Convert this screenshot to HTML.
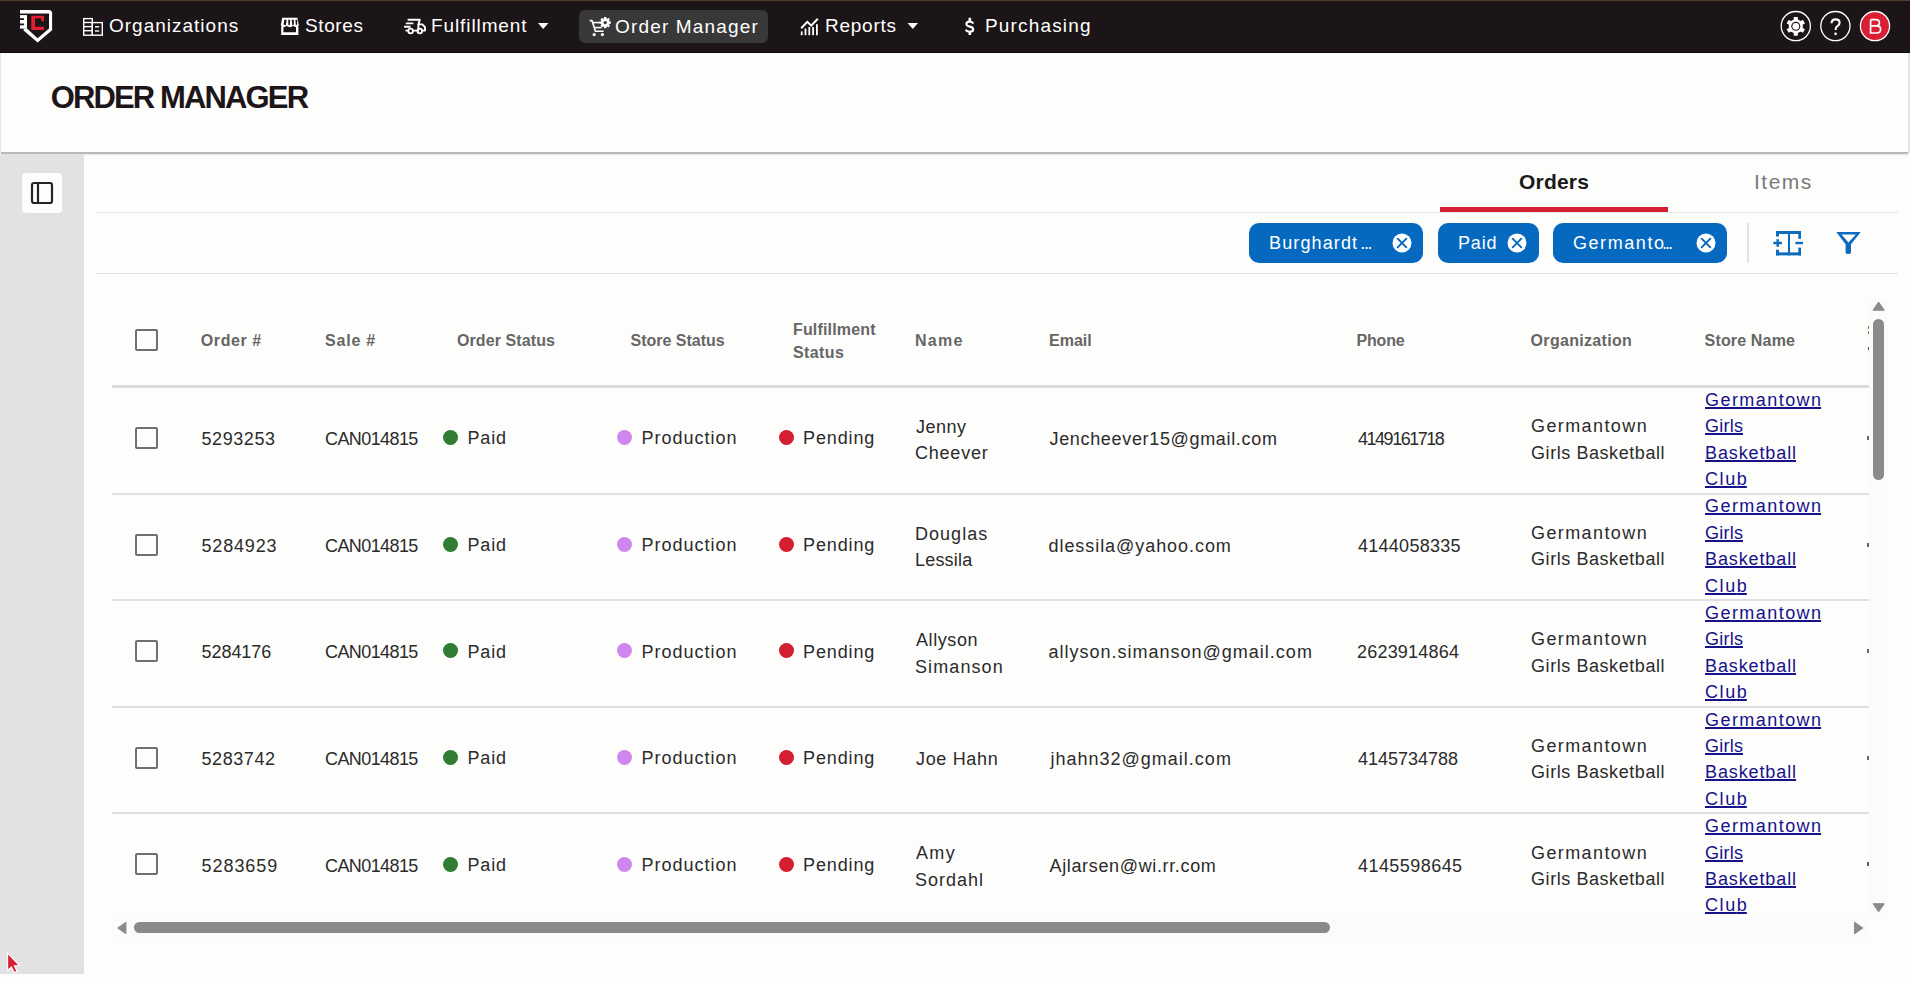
<!DOCTYPE html>
<html><head><meta charset="utf-8"><style>
html,body{margin:0;padding:0;}
body{width:1910px;height:984px;overflow:hidden;position:relative;background:#fdfdfc;font-family:"Liberation Sans", sans-serif;}
.t{position:absolute;white-space:nowrap;line-height:1;}
</style></head><body>
<div style="position:absolute;left:0px;top:0px;width:1910px;height:53px;background:#1c1517;"></div><div style="position:absolute;left:0px;top:0px;width:1910px;height:1px;background:#4e3d27;"></div><div style="position:absolute;left:0px;top:52px;width:1910px;height:1px;background:#0e0b0c;"></div><div style="position:absolute;left:579px;top:10px;width:189px;height:33px;background:#383838;border-radius:6px;"></div><div style="position:absolute;left:0px;top:53px;width:1910px;height:100px;background:#e4e4e6;"></div><div style="position:absolute;left:1px;top:53px;width:1907px;height:99px;background:#fdfdfc;"></div><div style="position:absolute;left:1px;top:152px;width:1907px;height:2px;background:#b9b9b9;"></div><div style="position:absolute;left:1px;top:154px;width:1907px;height:2px;background:linear-gradient(#e4e4e4,rgba(240,240,240,0));"></div><div style="position:absolute;left:0px;top:154px;width:84px;height:820px;background:#e2e2e5;"></div><div style="position:absolute;left:22px;top:173px;width:40px;height:40px;background:#fdfdfc;border-radius:4px;"></div><svg style="position:absolute;left:30px;top:181px" width="24" height="24" viewBox="0 0 24 24"><rect x="2" y="2" width="20" height="20" rx="2" fill="none" stroke="#252525" stroke-width="2.2"/><line x1="8" y1="2" x2="8" y2="22" stroke="#222" stroke-width="2.2"/></svg><div style="position:absolute;left:96px;top:212px;width:1802px;height:1px;background:#e3e3e3;"></div><div style="position:absolute;left:1440px;top:207px;width:228px;height:5px;background:#d71f34;"></div><div style="position:absolute;left:96px;top:273px;width:1802px;height:1px;background:#e3e3e3;"></div><div style="position:absolute;left:1249px;top:223px;width:174px;height:40px;background:#0569bf;border-radius:10px;"></div><svg style="position:absolute;left:1392.3px;top:232.6px" width="20" height="20" viewBox="0 0 20 20"><circle cx="10" cy="10" r="9.5" fill="#fff"/><path d="M5.7 5.7L14.3 14.3M14.3 5.7L5.7 14.3" stroke="#0569bf" stroke-width="1.9" stroke-linecap="round"/></svg><div style="position:absolute;left:1438px;top:223px;width:100.5px;height:40px;background:#0569bf;border-radius:10px;"></div><svg style="position:absolute;left:1507px;top:232.6px" width="20" height="20" viewBox="0 0 20 20"><circle cx="10" cy="10" r="9.5" fill="#fff"/><path d="M5.7 5.7L14.3 14.3M14.3 5.7L5.7 14.3" stroke="#0569bf" stroke-width="1.9" stroke-linecap="round"/></svg><div style="position:absolute;left:1553px;top:223px;width:174px;height:40px;background:#0569bf;border-radius:10px;"></div><svg style="position:absolute;left:1696px;top:232.6px" width="20" height="20" viewBox="0 0 20 20"><circle cx="10" cy="10" r="9.5" fill="#fff"/><path d="M5.7 5.7L14.3 14.3M14.3 5.7L5.7 14.3" stroke="#0569bf" stroke-width="1.9" stroke-linecap="round"/></svg><div style="position:absolute;left:1747px;top:223px;width:2px;height:40px;background:#e4e4e4;"></div><svg style="position:absolute;left:1772px;top:230px" width="34" height="27" viewBox="0 0 34 27"><g fill="#0b6cbd"><rect x="4" y="1" width="25" height="3"/><rect x="4" y="22.4" width="25" height="3"/><rect x="4" y="1" width="3" height="5.5"/><rect x="4" y="19.8" width="3" height="5.6"/><rect x="26.3" y="1" width="2.7" height="7.8"/><rect x="26.3" y="17.6" width="2.7" height="7.8"/><rect x="16" y="1" width="2" height="24.4"/><rect x="1.4" y="11.8" width="8.6" height="2.4"/><rect x="4.5" y="9.2" width="2.4" height="7.7"/><rect x="23.4" y="11.8" width="7.6" height="2.4"/></g></svg><svg style="position:absolute;left:1835px;top:230px" width="28" height="27" viewBox="0 0 28 27"><path d="M2.1 1.9 H24.9 Q25.6 2 25.2 2.8 L16 14.3 V22.4 Q16 23.9 13.3 23.9 Q10.6 23.9 10.6 22.4 V14.3 L1.8 2.8 Q1.4 2 2.1 1.9 Z M6.5 4.4 H20.8 L13.5 12.6 Z" fill="#0b6cbd" fill-rule="evenodd"/></svg><div style="position:absolute;left:135px;top:329px;width:22.6px;height:22px;box-sizing:border-box;border:2.6px solid #707070;border-radius:2px;background:#fdfdfc;"></div><div style="position:absolute;left:112px;top:385px;width:1757px;height:3px;background:#dcdcdf;"></div><div style="position:absolute;left:135px;top:427.0px;width:22.6px;height:22px;box-sizing:border-box;border:2.6px solid #707070;border-radius:2px;background:#fdfdfc;"></div><div style="position:absolute;left:112px;top:492.5px;width:1757px;height:2px;background:#e0e0e0;"></div><div style="position:absolute;left:442.5px;top:430.1px;width:15px;height:15px;border-radius:50%;background:#2e7d32"></div><div style="position:absolute;left:617.0px;top:430.1px;width:15px;height:15px;border-radius:50%;background:#cf86ef"></div><div style="position:absolute;left:778.8px;top:430.1px;width:15px;height:15px;border-radius:50%;background:#d41f30"></div><div style="position:absolute;left:135px;top:533.6px;width:22.6px;height:22px;box-sizing:border-box;border:2.6px solid #707070;border-radius:2px;background:#fdfdfc;"></div><div style="position:absolute;left:112px;top:599.1px;width:1757px;height:2px;background:#e0e0e0;"></div><div style="position:absolute;left:442.5px;top:536.7px;width:15px;height:15px;border-radius:50%;background:#2e7d32"></div><div style="position:absolute;left:617.0px;top:536.7px;width:15px;height:15px;border-radius:50%;background:#cf86ef"></div><div style="position:absolute;left:778.8px;top:536.7px;width:15px;height:15px;border-radius:50%;background:#d41f30"></div><div style="position:absolute;left:135px;top:640.2px;width:22.6px;height:22px;box-sizing:border-box;border:2.6px solid #707070;border-radius:2px;background:#fdfdfc;"></div><div style="position:absolute;left:112px;top:705.7px;width:1757px;height:2px;background:#e0e0e0;"></div><div style="position:absolute;left:442.5px;top:643.3px;width:15px;height:15px;border-radius:50%;background:#2e7d32"></div><div style="position:absolute;left:617.0px;top:643.3px;width:15px;height:15px;border-radius:50%;background:#cf86ef"></div><div style="position:absolute;left:778.8px;top:643.3px;width:15px;height:15px;border-radius:50%;background:#d41f30"></div><div style="position:absolute;left:135px;top:746.8px;width:22.6px;height:22px;box-sizing:border-box;border:2.6px solid #707070;border-radius:2px;background:#fdfdfc;"></div><div style="position:absolute;left:112px;top:812.3px;width:1757px;height:2px;background:#e0e0e0;"></div><div style="position:absolute;left:442.5px;top:749.9px;width:15px;height:15px;border-radius:50%;background:#2e7d32"></div><div style="position:absolute;left:617.0px;top:749.9px;width:15px;height:15px;border-radius:50%;background:#cf86ef"></div><div style="position:absolute;left:778.8px;top:749.9px;width:15px;height:15px;border-radius:50%;background:#d41f30"></div><div style="position:absolute;left:135px;top:853.4px;width:22.6px;height:22px;box-sizing:border-box;border:2.6px solid #707070;border-radius:2px;background:#fdfdfc;"></div><div style="position:absolute;left:442.5px;top:856.5px;width:15px;height:15px;border-radius:50%;background:#2e7d32"></div><div style="position:absolute;left:617.0px;top:856.5px;width:15px;height:15px;border-radius:50%;background:#cf86ef"></div><div style="position:absolute;left:778.8px;top:856.5px;width:15px;height:15px;border-radius:50%;background:#d41f30"></div><div style="position:absolute;left:1867px;top:436.0px;width:1.5px;height:4px;background:#666;"></div><div style="position:absolute;left:1867px;top:542.6px;width:1.5px;height:4px;background:#666;"></div><div style="position:absolute;left:1867px;top:649.2px;width:1.5px;height:4px;background:#666;"></div><div style="position:absolute;left:1867px;top:755.8px;width:1.5px;height:4px;background:#666;"></div><div style="position:absolute;left:1867px;top:862.4px;width:1.5px;height:4px;background:#666;"></div><div style="position:absolute;left:1867.6px;top:326px;width:1.2px;height:3.2px;background:#8a6a4a;"></div><div style="position:absolute;left:1867.6px;top:331px;width:1.2px;height:2.6px;background:#8a7a6a;"></div><div style="position:absolute;left:1867.6px;top:347px;width:1.2px;height:2.6px;background:#555;"></div><div style="position:absolute;left:1869px;top:298px;width:18px;height:620px;background:#fbfbfb;"></div><div style="position:absolute;left:112px;top:918px;width:1757px;height:19px;background:#fbfbfb;"></div><svg style="position:absolute;left:0;top:0" width="1910" height="984" viewBox="0 0 1910 984"><g fill="#8a8a8a" stroke="#8a8a8a" stroke-width="1.2" stroke-linejoin="round"><path d="M1873.3 310.2 L1884 310.2 L1878.6 302.4 Z"/><path d="M1873.3 903.8 L1884 903.8 L1878.6 911.4 Z"/><path d="M125.8 922.4 L125.8 933.4 L118 927.9 Z"/><path d="M1854.6 922.4 L1854.6 933.4 L1862.6 927.9 Z"/></g><rect x="1873" y="319" width="11" height="161" rx="5.5" fill="#8a8a8a"/><rect x="134" y="922" width="1196" height="11" rx="5.5" fill="#8a8a8a"/></svg><svg style="position:absolute;left:0;top:0" width="1910" height="53" viewBox="0 0 1910 53"><g fill="#fff"><path d="M20 10 H48.6 Q52 10 52 13.4 V13.4 H20 Z"/><rect x="20" y="10" width="29" height="3.1"/><rect x="49" y="12" width="3.1" height="17.6"/><path d="M52.1 28.4 L52.1 30.2 L37.6 42.6 L23.6 30.4 L23.6 28.6 L27 28.6 L37.6 38.2 L49 28.4 Z"/><rect x="20" y="15.1" width="7" height="13.5"/></g><g fill="#1c1517"><rect x="19.5" y="18.2" width="4.4" height="1.8"/><rect x="19.5" y="23.5" width="4.4" height="1.8"/></g><path d="M31.3 15.7 H44 V21.2 H41.2 V18.3 H35 V26.7 H44 V30.1 H31.3 Z" fill="#e51d2e"/><g fill="none" stroke="#fff" stroke-width="1.4"><rect x="83.7" y="18.6" width="8.6" height="16.6"/><line x1="83.7" y1="22.5" x2="92.3" y2="22.5"/><line x1="83.7" y1="26.6" x2="92.3" y2="26.6"/><line x1="83.7" y1="30.7" x2="92.3" y2="30.7"/><rect x="92.3" y="22.6" width="10" height="12.6"/><line x1="95" y1="26.8" x2="99.2" y2="26.8"/><line x1="95" y1="31" x2="99.2" y2="31"/></g><g fill="#fff"><path d="M282.2 17.8 H297.4 L298.8 25.2 Q298.4 27.2 296.2 27.2 Q294.4 27.2 293.2 25.8 Q292 27.2 290 27.2 Q288 27.2 286.6 25.8 Q285.4 27.2 283.6 27.2 Q281.4 27.2 280.8 25.2 Z"/></g><g fill="#1c1517"><path d="M284.4 19.8 H286.6 L285.9 24.8 Q285.2 25.6 284.2 24.8 L283.6 24.4 Z"/><path d="M288.2 19.8 H290.2 L289.9 24.8 Q289.2 25.6 288.4 24.8 Z"/><path d="M291.8 19.8 H293.8 L293.8 24.6 Q293 25.6 292.2 24.8 Z"/><path d="M295.4 19.8 H297.4 L297.1 24.4 Q296.4 25.4 295.8 24.6 Z"/></g><path d="M281.2 26.4 H283.4 V32.3 H296 V26.4 H298.4 V35 H281.2 Z" fill="#fff"/><g fill="none" stroke="#fff" stroke-width="1.9" stroke-linecap="round" stroke-linejoin="round"><path d="M408.4 19.8 H419.8 L418.4 24.4 H422.4 L425 27.2 V30.6 H422.2"/><path d="M418.4 24.4 V30.6"/><path d="M406.2 30.6 H408"/><path d="M413.2 30.6 H417"/><path d="M406.6 23.4 H412.6"/><path d="M404.8 26.8 H409.8"/></g><g fill="none" stroke="#fff" stroke-width="1.8"><circle cx="410.6" cy="31" r="2.3"/><circle cx="419.8" cy="31" r="2.3"/></g><g fill="none" stroke="#fff" stroke-width="1.6" stroke-linejoin="round"><path d="M589.6 20.6 H592 L595.4 31.2 H603.6"/><path d="M592.8 22.6 H600"/><path d="M594.6 27.6 H601.6"/></g><circle cx="594.2" cy="34.6" r="1.6" fill="#fff"/><circle cx="602.4" cy="34.6" r="1.6" fill="#fff"/><g transform="translate(605.2 22.6)"><circle r="4.3" fill="#fff"/><g fill="#fff"><rect x="-1.2" y="-5.6" width="2.4" height="2.6" transform="rotate(0)"/><rect x="-1.2" y="-5.6" width="2.4" height="2.6" transform="rotate(45)"/><rect x="-1.2" y="-5.6" width="2.4" height="2.6" transform="rotate(90)"/><rect x="-1.2" y="-5.6" width="2.4" height="2.6" transform="rotate(135)"/><rect x="-1.2" y="-5.6" width="2.4" height="2.6" transform="rotate(180)"/><rect x="-1.2" y="-5.6" width="2.4" height="2.6" transform="rotate(225)"/><rect x="-1.2" y="-5.6" width="2.4" height="2.6" transform="rotate(270)"/><rect x="-1.2" y="-5.6" width="2.4" height="2.6" transform="rotate(315)"/></g><circle r="1.7" fill="#383838"/></g><path d="M801.2 28.2 L807.3 21.8 L811.2 25.6 L817.8 18.8" fill="none" stroke="#fff" stroke-width="2"/><g fill="#fff"><rect x="800.8" y="31.4" width="1.8" height="3.8"/><rect x="804.6" y="28.6" width="1.8" height="6.6"/><rect x="808.4" y="27" width="1.8" height="8.2"/><rect x="812.2" y="27" width="1.8" height="8.2"/><rect x="816" y="24.2" width="1.8" height="11"/></g><path d="M973.3 23.6 Q972.4 21.6 969.7 21.6 Q966.4 21.6 966.4 24.1 Q966.4 26.1 969.7 26.6 Q973.2 27.2 973.2 29.5 Q973.2 31.7 969.7 31.7 Q966.7 31.7 965.8 29.6" fill="none" stroke="#fff" stroke-width="2.1"/><rect x="968.5" y="17.8" width="2.6" height="4" fill="#fff"/><rect x="968.5" y="31" width="2.6" height="4" fill="#fff"/><path d="M538 23 H548.4 L543.2 29 Z" fill="#fff"/><path d="M907.6 23 H918 L912.8 29 Z" fill="#fff"/><circle cx="1795.8" cy="26.1" r="14.6" fill="none" stroke="#fff" stroke-width="1.3"/><circle cx="1835.4" cy="26.1" r="14.6" fill="none" stroke="#fff" stroke-width="1.3"/><circle cx="1875" cy="26.1" r="14.6" fill="#d81f33" stroke="#fff" stroke-width="1.3"/><g transform="translate(1795.8 26.3)"><circle r="7" fill="#fff"/><g fill="#fff"><rect x="-2.1" y="-9.4" width="4.2" height="4" rx="0.6" transform="rotate(0)"/><rect x="-2.1" y="-9.4" width="4.2" height="4" rx="0.6" transform="rotate(60)"/><rect x="-2.1" y="-9.4" width="4.2" height="4" rx="0.6" transform="rotate(120)"/><rect x="-2.1" y="-9.4" width="4.2" height="4" rx="0.6" transform="rotate(180)"/><rect x="-2.1" y="-9.4" width="4.2" height="4" rx="0.6" transform="rotate(240)"/><rect x="-2.1" y="-9.4" width="4.2" height="4" rx="0.6" transform="rotate(300)"/></g><circle r="4.5" fill="#1c1517"/><circle r="3.4" fill="#fff"/></g><path d="M1831.6 23.2 Q1831.6 19.4 1835.6 19.4 Q1839.6 19.4 1839.6 22.8 Q1839.6 25 1837.4 26.2 Q1835.6 27.2 1835.6 30" fill="none" stroke="#fff" stroke-width="2.1"/><path d="M1870.6 19.7 V33 H1876.6 Q1880.6 33 1880.6 29.2 Q1880.6 25.9 1876.4 25.9 H1870.6 M1870.6 25.9 H1875.8 Q1879.4 25.9 1879.4 22.8 Q1879.4 19.7 1875.8 19.7 H1870.6" fill="none" stroke="#fff" stroke-width="1.7"/><circle cx="1835.6" cy="33.8" r="1.4" fill="#fff"/></svg><svg style="position:absolute;left:6px;top:952px" width="16" height="22" viewBox="0 0 16 22"><path d="M1.6 1.2 L1.6 18.4 L5.4 14.8 L8.2 20.6 L11 19.4 L8.4 13.8 L13.4 13.6 Z" fill="#d81f33" stroke="#fff" stroke-width="1.1" stroke-linejoin="miter"/></svg>
<div class="t" style="left:109.00px;top:16.30px;font-size:19px;font-weight:400;color:#ffffff;letter-spacing:1.000px;">Organization<span style="letter-spacing:0">s</span></div><div class="t" style="left:305.00px;top:16.30px;font-size:19px;font-weight:400;color:#ffffff;letter-spacing:0.600px;">Store<span style="letter-spacing:0">s</span></div><div class="t" style="left:431.00px;top:16.30px;font-size:19px;font-weight:400;color:#ffffff;letter-spacing:0.900px;">Fulfillmen<span style="letter-spacing:0">t</span></div><div class="t" style="left:615.00px;top:16.50px;font-size:19px;font-weight:400;color:#ffffff;letter-spacing:1.167px;">Order Manage<span style="letter-spacing:0">r</span></div><div class="t" style="left:825.00px;top:16.30px;font-size:19px;font-weight:400;color:#ffffff;letter-spacing:0.750px;">Report<span style="letter-spacing:0">s</span></div><div class="t" style="left:985.00px;top:16.30px;font-size:19px;font-weight:400;color:#ffffff;letter-spacing:1.167px;">Purchasin<span style="letter-spacing:0">g</span></div><div class="t" style="left:50.70px;top:82.00px;font-size:31px;font-weight:700;color:#1d1517;letter-spacing:-1.867px;">ORDER MANAGE<span style="letter-spacing:0">R</span></div><div class="t" style="left:1519.00px;top:171.40px;font-size:21px;font-weight:700;color:#1a1a1a;letter-spacing:0.200px;">Order<span style="letter-spacing:0">s</span></div><div class="t" style="left:1754.00px;top:171.40px;font-size:21px;font-weight:400;color:#7a7a7a;letter-spacing:1.500px;">Item<span style="letter-spacing:0">s</span></div><div class="t" style="left:1269.00px;top:233.50px;font-size:18px;font-weight:400;color:#ffffff;letter-spacing:1.125px;">Burghard<span style="letter-spacing:0">t</span></div><div class="t" style="left:1360.30px;top:233.50px;font-size:18px;font-weight:400;color:#ffffff;letter-spacing:-1.400px;">..<span style="letter-spacing:0">.</span></div><div class="t" style="left:1458.00px;top:233.50px;font-size:18px;font-weight:400;color:#ffffff;letter-spacing:0.833px;">Pai<span style="letter-spacing:0">d</span></div><div class="t" style="left:1572.90px;top:233.50px;font-size:18px;font-weight:400;color:#ffffff;letter-spacing:1.586px;">Germant<span style="letter-spacing:0">o</span></div><div class="t" style="left:1662.00px;top:233.50px;font-size:18px;font-weight:400;color:#ffffff;letter-spacing:-2.000px;">..<span style="letter-spacing:0">.</span></div><div class="t" style="left:200.80px;top:332.80px;font-size:16px;font-weight:700;color:#666666;letter-spacing:0.583px;">Order <span style="letter-spacing:0">#</span></div><div class="t" style="left:325.00px;top:332.80px;font-size:16px;font-weight:700;color:#666666;letter-spacing:0.800px;">Sale <span style="letter-spacing:0">#</span></div><div class="t" style="left:457.00px;top:332.80px;font-size:16px;font-weight:700;color:#666666;letter-spacing:0.091px;">Order Statu<span style="letter-spacing:0">s</span></div><div class="t" style="left:630.50px;top:332.80px;font-size:16px;font-weight:700;color:#666666;letter-spacing:0.000px;">Store Status</div><div class="t" style="left:793.00px;top:322.00px;font-size:16px;font-weight:700;color:#666666;letter-spacing:0.160px;">Fulfillmen<span style="letter-spacing:0">t</span></div><div class="t" style="left:793.00px;top:344.80px;font-size:16px;font-weight:700;color:#666666;letter-spacing:0.400px;">Statu<span style="letter-spacing:0">s</span></div><div class="t" style="left:915.00px;top:332.80px;font-size:16px;font-weight:700;color:#666666;letter-spacing:1.233px;">Nam<span style="letter-spacing:0">e</span></div><div class="t" style="left:1049.00px;top:332.80px;font-size:16px;font-weight:700;color:#666666;letter-spacing:0.000px;">Email</div><div class="t" style="left:1356.50px;top:332.80px;font-size:16px;font-weight:700;color:#666666;letter-spacing:-0.175px;">Phon<span style="letter-spacing:0">e</span></div><div class="t" style="left:1530.60px;top:332.80px;font-size:16px;font-weight:700;color:#666666;letter-spacing:0.309px;">Organizatio<span style="letter-spacing:0">n</span></div><div class="t" style="left:1704.60px;top:332.80px;font-size:16px;font-weight:700;color:#666666;letter-spacing:0.156px;">Store Nam<span style="letter-spacing:0">e</span></div><div class="t" style="left:201.50px;top:430.20px;font-size:18px;font-weight:400;color:#2b2b2b;letter-spacing:0.567px;">529325<span style="letter-spacing:0">3</span></div><div class="t" style="left:325.00px;top:430.20px;font-size:18px;font-weight:400;color:#2b2b2b;letter-spacing:-0.588px;">CAN01481<span style="letter-spacing:0">5</span></div><div class="t" style="left:467.40px;top:429.40px;font-size:18px;font-weight:400;color:#2b2b2b;letter-spacing:0.867px;">Pai<span style="letter-spacing:0">d</span></div><div class="t" style="left:641.40px;top:429.40px;font-size:18px;font-weight:400;color:#2b2b2b;letter-spacing:1.000px;">Productio<span style="letter-spacing:0">n</span></div><div class="t" style="left:803.00px;top:429.40px;font-size:18px;font-weight:400;color:#2b2b2b;letter-spacing:0.883px;">Pendin<span style="letter-spacing:0">g</span></div><div class="t" style="left:916.00px;top:418.00px;font-size:18px;font-weight:400;color:#2b2b2b;letter-spacing:0.500px;">Jenn<span style="letter-spacing:0">y</span></div><div class="t" style="left:915.00px;top:444.30px;font-size:18px;font-weight:400;color:#2b2b2b;letter-spacing:0.783px;">Cheeve<span style="letter-spacing:0">r</span></div><div class="t" style="left:1049.50px;top:430.20px;font-size:18px;font-weight:400;color:#2b2b2b;letter-spacing:0.667px;">Jencheever15@gmail.co<span style="letter-spacing:0">m</span></div><div class="t" style="left:1358.00px;top:430.20px;font-size:18px;font-weight:400;color:#2b2b2b;letter-spacing:-1.478px;">414916171<span style="letter-spacing:0">8</span></div><div class="t" style="left:1531.00px;top:417.20px;font-size:18px;font-weight:400;color:#2b2b2b;letter-spacing:1.400px;">Germantow<span style="letter-spacing:0">n</span></div><div class="t" style="left:1531.00px;top:443.60px;font-size:18px;font-weight:400;color:#2b2b2b;letter-spacing:0.567px;">Girls Basketbal<span style="letter-spacing:0">l</span></div><div class="t" style="left:1705.00px;top:390.70px;font-size:18px;font-weight:400;color:#16128a;letter-spacing:1.444px;text-decoration:underline;text-underline-offset:1px;text-decoration-thickness:1.6px;">Germantow<span style="letter-spacing:0">n</span></div><div class="t" style="left:1705.00px;top:417.10px;font-size:18px;font-weight:400;color:#16128a;letter-spacing:0.250px;text-decoration:underline;text-underline-offset:1px;text-decoration-thickness:1.6px;">Girl<span style="letter-spacing:0">s</span></div><div class="t" style="left:1705.00px;top:443.50px;font-size:18px;font-weight:400;color:#16128a;letter-spacing:0.889px;text-decoration:underline;text-underline-offset:1px;text-decoration-thickness:1.6px;">Basketbal<span style="letter-spacing:0">l</span></div><div class="t" style="left:1705.00px;top:469.90px;font-size:18px;font-weight:400;color:#16128a;letter-spacing:1.600px;text-decoration:underline;text-underline-offset:1px;text-decoration-thickness:1.6px;">Clu<span style="letter-spacing:0">b</span></div><div class="t" style="left:201.50px;top:536.80px;font-size:18px;font-weight:400;color:#2b2b2b;letter-spacing:0.833px;">528492<span style="letter-spacing:0">3</span></div><div class="t" style="left:325.00px;top:536.80px;font-size:18px;font-weight:400;color:#2b2b2b;letter-spacing:-0.588px;">CAN01481<span style="letter-spacing:0">5</span></div><div class="t" style="left:467.40px;top:536.00px;font-size:18px;font-weight:400;color:#2b2b2b;letter-spacing:0.867px;">Pai<span style="letter-spacing:0">d</span></div><div class="t" style="left:641.40px;top:536.00px;font-size:18px;font-weight:400;color:#2b2b2b;letter-spacing:1.000px;">Productio<span style="letter-spacing:0">n</span></div><div class="t" style="left:803.00px;top:536.00px;font-size:18px;font-weight:400;color:#2b2b2b;letter-spacing:0.883px;">Pendin<span style="letter-spacing:0">g</span></div><div class="t" style="left:915.00px;top:524.60px;font-size:18px;font-weight:400;color:#2b2b2b;letter-spacing:1.033px;">Dougla<span style="letter-spacing:0">s</span></div><div class="t" style="left:915.00px;top:550.90px;font-size:18px;font-weight:400;color:#2b2b2b;letter-spacing:0.200px;">Lessil<span style="letter-spacing:0">a</span></div><div class="t" style="left:1048.50px;top:536.80px;font-size:18px;font-weight:400;color:#2b2b2b;letter-spacing:0.941px;">dlessila@yahoo.co<span style="letter-spacing:0">m</span></div><div class="t" style="left:1358.00px;top:536.80px;font-size:18px;font-weight:400;color:#2b2b2b;letter-spacing:0.267px;">414405833<span style="letter-spacing:0">5</span></div><div class="t" style="left:1531.00px;top:523.80px;font-size:18px;font-weight:400;color:#2b2b2b;letter-spacing:1.400px;">Germantow<span style="letter-spacing:0">n</span></div><div class="t" style="left:1531.00px;top:550.20px;font-size:18px;font-weight:400;color:#2b2b2b;letter-spacing:0.567px;">Girls Basketbal<span style="letter-spacing:0">l</span></div><div class="t" style="left:1705.00px;top:497.30px;font-size:18px;font-weight:400;color:#16128a;letter-spacing:1.444px;text-decoration:underline;text-underline-offset:1px;text-decoration-thickness:1.6px;">Germantow<span style="letter-spacing:0">n</span></div><div class="t" style="left:1705.00px;top:523.70px;font-size:18px;font-weight:400;color:#16128a;letter-spacing:0.250px;text-decoration:underline;text-underline-offset:1px;text-decoration-thickness:1.6px;">Girl<span style="letter-spacing:0">s</span></div><div class="t" style="left:1705.00px;top:550.10px;font-size:18px;font-weight:400;color:#16128a;letter-spacing:0.889px;text-decoration:underline;text-underline-offset:1px;text-decoration-thickness:1.6px;">Basketbal<span style="letter-spacing:0">l</span></div><div class="t" style="left:1705.00px;top:576.50px;font-size:18px;font-weight:400;color:#16128a;letter-spacing:1.600px;text-decoration:underline;text-underline-offset:1px;text-decoration-thickness:1.6px;">Clu<span style="letter-spacing:0">b</span></div><div class="t" style="left:201.50px;top:643.40px;font-size:18px;font-weight:400;color:#2b2b2b;letter-spacing:-0.050px;">528417<span style="letter-spacing:0">6</span></div><div class="t" style="left:325.00px;top:643.40px;font-size:18px;font-weight:400;color:#2b2b2b;letter-spacing:-0.588px;">CAN01481<span style="letter-spacing:0">5</span></div><div class="t" style="left:467.40px;top:642.60px;font-size:18px;font-weight:400;color:#2b2b2b;letter-spacing:0.867px;">Pai<span style="letter-spacing:0">d</span></div><div class="t" style="left:641.40px;top:642.60px;font-size:18px;font-weight:400;color:#2b2b2b;letter-spacing:1.000px;">Productio<span style="letter-spacing:0">n</span></div><div class="t" style="left:803.00px;top:642.60px;font-size:18px;font-weight:400;color:#2b2b2b;letter-spacing:0.883px;">Pendin<span style="letter-spacing:0">g</span></div><div class="t" style="left:916.00px;top:631.20px;font-size:18px;font-weight:400;color:#2b2b2b;letter-spacing:0.583px;">Allyso<span style="letter-spacing:0">n</span></div><div class="t" style="left:915.00px;top:657.50px;font-size:18px;font-weight:400;color:#2b2b2b;letter-spacing:1.100px;">Simanso<span style="letter-spacing:0">n</span></div><div class="t" style="left:1048.50px;top:643.40px;font-size:18px;font-weight:400;color:#2b2b2b;letter-spacing:1.000px;">allyson.simanson@gmail.co<span style="letter-spacing:0">m</span></div><div class="t" style="left:1357.00px;top:643.40px;font-size:18px;font-weight:400;color:#2b2b2b;letter-spacing:0.200px;">262391486<span style="letter-spacing:0">4</span></div><div class="t" style="left:1531.00px;top:630.40px;font-size:18px;font-weight:400;color:#2b2b2b;letter-spacing:1.400px;">Germantow<span style="letter-spacing:0">n</span></div><div class="t" style="left:1531.00px;top:656.80px;font-size:18px;font-weight:400;color:#2b2b2b;letter-spacing:0.567px;">Girls Basketbal<span style="letter-spacing:0">l</span></div><div class="t" style="left:1705.00px;top:603.90px;font-size:18px;font-weight:400;color:#16128a;letter-spacing:1.444px;text-decoration:underline;text-underline-offset:1px;text-decoration-thickness:1.6px;">Germantow<span style="letter-spacing:0">n</span></div><div class="t" style="left:1705.00px;top:630.30px;font-size:18px;font-weight:400;color:#16128a;letter-spacing:0.250px;text-decoration:underline;text-underline-offset:1px;text-decoration-thickness:1.6px;">Girl<span style="letter-spacing:0">s</span></div><div class="t" style="left:1705.00px;top:656.70px;font-size:18px;font-weight:400;color:#16128a;letter-spacing:0.889px;text-decoration:underline;text-underline-offset:1px;text-decoration-thickness:1.6px;">Basketbal<span style="letter-spacing:0">l</span></div><div class="t" style="left:1705.00px;top:683.10px;font-size:18px;font-weight:400;color:#16128a;letter-spacing:1.600px;text-decoration:underline;text-underline-offset:1px;text-decoration-thickness:1.6px;">Clu<span style="letter-spacing:0">b</span></div><div class="t" style="left:201.50px;top:750.00px;font-size:18px;font-weight:400;color:#2b2b2b;letter-spacing:0.583px;">528374<span style="letter-spacing:0">2</span></div><div class="t" style="left:325.00px;top:750.00px;font-size:18px;font-weight:400;color:#2b2b2b;letter-spacing:-0.588px;">CAN01481<span style="letter-spacing:0">5</span></div><div class="t" style="left:467.40px;top:749.20px;font-size:18px;font-weight:400;color:#2b2b2b;letter-spacing:0.867px;">Pai<span style="letter-spacing:0">d</span></div><div class="t" style="left:641.40px;top:749.20px;font-size:18px;font-weight:400;color:#2b2b2b;letter-spacing:1.000px;">Productio<span style="letter-spacing:0">n</span></div><div class="t" style="left:803.00px;top:749.20px;font-size:18px;font-weight:400;color:#2b2b2b;letter-spacing:0.883px;">Pendin<span style="letter-spacing:0">g</span></div><div class="t" style="left:916.00px;top:750.00px;font-size:18px;font-weight:400;color:#2b2b2b;letter-spacing:0.657px;">Joe Hah<span style="letter-spacing:0">n</span></div><div class="t" style="left:1050.50px;top:750.00px;font-size:18px;font-weight:400;color:#2b2b2b;letter-spacing:1.000px;">jhahn32@gmail.co<span style="letter-spacing:0">m</span></div><div class="t" style="left:1358.00px;top:750.00px;font-size:18px;font-weight:400;color:#2b2b2b;letter-spacing:0.000px;">4145734788</div><div class="t" style="left:1531.00px;top:737.00px;font-size:18px;font-weight:400;color:#2b2b2b;letter-spacing:1.400px;">Germantow<span style="letter-spacing:0">n</span></div><div class="t" style="left:1531.00px;top:763.40px;font-size:18px;font-weight:400;color:#2b2b2b;letter-spacing:0.567px;">Girls Basketbal<span style="letter-spacing:0">l</span></div><div class="t" style="left:1705.00px;top:710.50px;font-size:18px;font-weight:400;color:#16128a;letter-spacing:1.444px;text-decoration:underline;text-underline-offset:1px;text-decoration-thickness:1.6px;">Germantow<span style="letter-spacing:0">n</span></div><div class="t" style="left:1705.00px;top:736.90px;font-size:18px;font-weight:400;color:#16128a;letter-spacing:0.250px;text-decoration:underline;text-underline-offset:1px;text-decoration-thickness:1.6px;">Girl<span style="letter-spacing:0">s</span></div><div class="t" style="left:1705.00px;top:763.30px;font-size:18px;font-weight:400;color:#16128a;letter-spacing:0.889px;text-decoration:underline;text-underline-offset:1px;text-decoration-thickness:1.6px;">Basketbal<span style="letter-spacing:0">l</span></div><div class="t" style="left:1705.00px;top:789.70px;font-size:18px;font-weight:400;color:#16128a;letter-spacing:1.600px;text-decoration:underline;text-underline-offset:1px;text-decoration-thickness:1.6px;">Clu<span style="letter-spacing:0">b</span></div><div class="t" style="left:201.50px;top:856.60px;font-size:18px;font-weight:400;color:#2b2b2b;letter-spacing:0.950px;">528365<span style="letter-spacing:0">9</span></div><div class="t" style="left:325.00px;top:856.60px;font-size:18px;font-weight:400;color:#2b2b2b;letter-spacing:-0.588px;">CAN01481<span style="letter-spacing:0">5</span></div><div class="t" style="left:467.40px;top:855.80px;font-size:18px;font-weight:400;color:#2b2b2b;letter-spacing:0.867px;">Pai<span style="letter-spacing:0">d</span></div><div class="t" style="left:641.40px;top:855.80px;font-size:18px;font-weight:400;color:#2b2b2b;letter-spacing:1.000px;">Productio<span style="letter-spacing:0">n</span></div><div class="t" style="left:803.00px;top:855.80px;font-size:18px;font-weight:400;color:#2b2b2b;letter-spacing:0.883px;">Pendin<span style="letter-spacing:0">g</span></div><div class="t" style="left:916.00px;top:844.40px;font-size:18px;font-weight:400;color:#2b2b2b;letter-spacing:1.350px;">Am<span style="letter-spacing:0">y</span></div><div class="t" style="left:915.00px;top:870.70px;font-size:18px;font-weight:400;color:#2b2b2b;letter-spacing:1.000px;">Sordah<span style="letter-spacing:0">l</span></div><div class="t" style="left:1049.50px;top:856.60px;font-size:18px;font-weight:400;color:#2b2b2b;letter-spacing:0.647px;">Ajlarsen@wi.rr.co<span style="letter-spacing:0">m</span></div><div class="t" style="left:1358.00px;top:856.60px;font-size:18px;font-weight:400;color:#2b2b2b;letter-spacing:0.444px;">414559864<span style="letter-spacing:0">5</span></div><div class="t" style="left:1531.00px;top:843.60px;font-size:18px;font-weight:400;color:#2b2b2b;letter-spacing:1.400px;">Germantow<span style="letter-spacing:0">n</span></div><div class="t" style="left:1531.00px;top:870.00px;font-size:18px;font-weight:400;color:#2b2b2b;letter-spacing:0.567px;">Girls Basketbal<span style="letter-spacing:0">l</span></div><div class="t" style="left:1705.00px;top:817.10px;font-size:18px;font-weight:400;color:#16128a;letter-spacing:1.444px;text-decoration:underline;text-underline-offset:1px;text-decoration-thickness:1.6px;">Germantow<span style="letter-spacing:0">n</span></div><div class="t" style="left:1705.00px;top:843.50px;font-size:18px;font-weight:400;color:#16128a;letter-spacing:0.250px;text-decoration:underline;text-underline-offset:1px;text-decoration-thickness:1.6px;">Girl<span style="letter-spacing:0">s</span></div><div class="t" style="left:1705.00px;top:869.90px;font-size:18px;font-weight:400;color:#16128a;letter-spacing:0.889px;text-decoration:underline;text-underline-offset:1px;text-decoration-thickness:1.6px;">Basketbal<span style="letter-spacing:0">l</span></div><div class="t" style="left:1705.00px;top:896.30px;font-size:18px;font-weight:400;color:#16128a;letter-spacing:1.600px;text-decoration:underline;text-underline-offset:1px;text-decoration-thickness:1.6px;">Clu<span style="letter-spacing:0">b</span></div>
</body></html>
